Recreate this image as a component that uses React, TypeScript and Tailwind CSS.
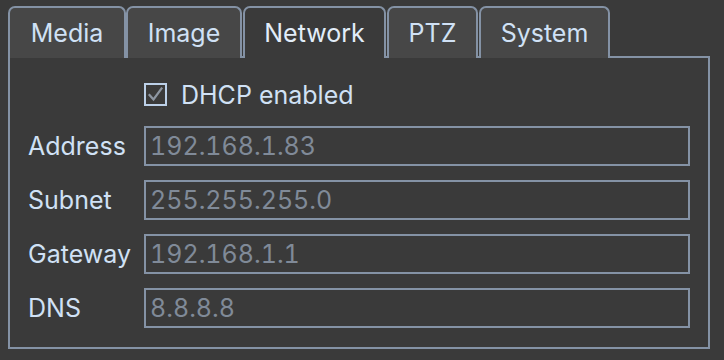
const tabs = [
  { name: 'Media', w: 'w-[118px]' },
  { name: 'Image', w: 'w-[116px]' },
  { name: 'Network', w: 'w-[143px] ml-px', active: true },
  { name: 'PTZ', w: 'w-[91px] ml-px' },
  { name: 'System', w: 'w-[131px] ml-px' }
]

const fields = [
  { label: 'Address', value: '192.168.1.83' },
  { label: 'Subnet', value: '255.255.255.0' },
  { label: 'Gateway', value: '192.168.1.1' },
  { label: 'DNS', value: '8.8.8.8' }
]

export default function App() {
  return (
    <div
      className="h-[360px] w-[724px] bg-[#3a3a3a] pl-[8px] pt-[6px] text-[25px] text-[#d0e1f5]"
      style={{ fontFamily: 'Inter, "Noto Sans", sans-serif' }}
    >
      <div className="flex h-[52px]">
        {tabs.map(tab => (
          <div
            key={tab.name}
            className={
              tab.active
                ? `relative z-10 flex ${tab.w} items-center justify-center rounded-t-[7px] border-2 border-b-0 border-[#8492a5] bg-[#3a3a3a] pt-[1px] text-[#e2edf9]`
                : `flex ${tab.w} items-center justify-center rounded-t-[7px] border-2 border-b-0 border-[#8492a5] bg-[#474747] pt-[1px]`
            }
          >
            {tab.name}
          </div>
        ))}
      </div>
      <div className="-mt-[2px] h-[293px] w-[702px] border-2 border-[#8492a5] bg-[#3a3a3a] pl-[18px] pt-[25px]">
        <div className="grid grid-cols-[116px_546px] items-center gap-y-[14px]">
          <div />
          <div className="mb-[6px] flex h-[23px] items-center gap-[14px] leading-none">
            <div className="flex h-[23px] w-[23px] items-center justify-center border-2 border-[#bcd0e8]">
              <svg width="17" height="17" viewBox="0 0 17 17" fill="none">
                <path d="M2.5 9 L6.5 13.5 L14.5 2.5" stroke="#8d96a2" strokeWidth="2.2" strokeLinecap="square" />
              </svg>
            </div>
            <span className="pt-[2px]">DHCP enabled</span>
          </div>
          {fields.map(f => (
            <div key={f.label} className="contents">
              <div className="leading-none">{f.label}</div>
              <div className="flex h-[40px] items-center border-2 border-[#8492a5] pl-[4px] pt-[1px] tabular-nums text-[#808a98]">
                {f.value}
              </div>
            </div>
          ))}
        </div>
      </div>
    </div>
  )
}
